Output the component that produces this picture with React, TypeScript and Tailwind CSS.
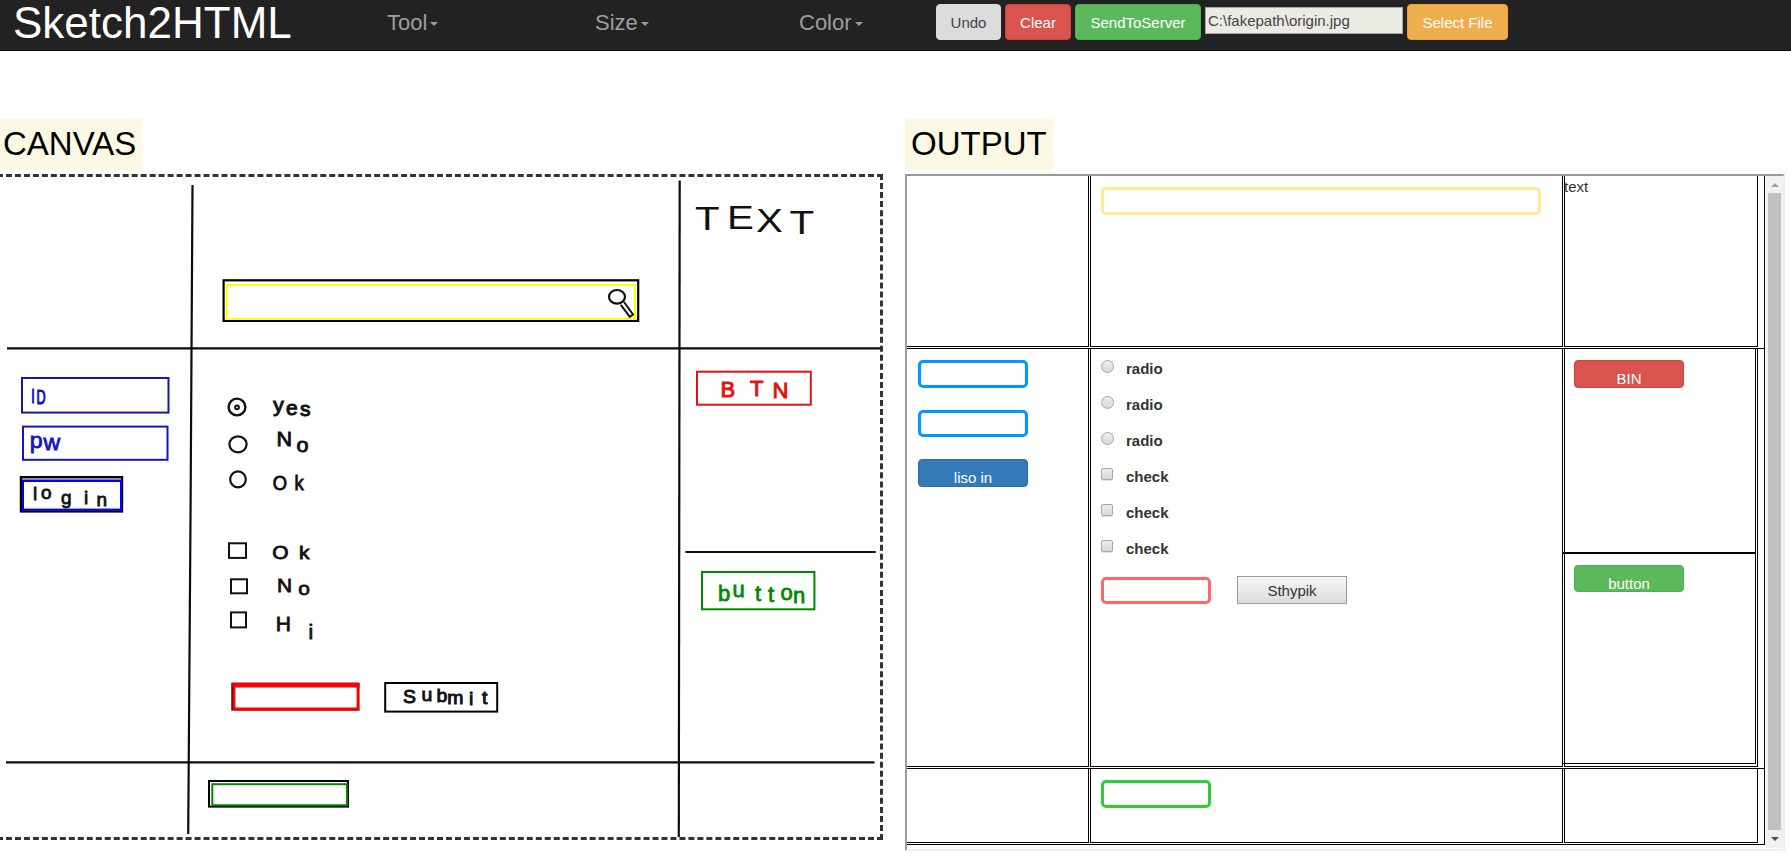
import type { ReactNode } from "react";

type InkProps = {
  text: string;
  xs: number[];
  ys: number[];
  size: number;
  sx?: number;
  color?: string;
  weight?: number;
};

/** A handwritten word: each letter has its own place on the canvas. */
function Ink({ text, xs, ys, size, sx = 1, color = "#111", weight = 0.8 }: InkProps) {
  return (
    <text
      transform={`scale(${sx} 1)`}
      x={xs.map((x) => (x / sx).toFixed(2)).join(" ")}
      y={ys.join(" ")}
      fontSize={size}
      fill={color}
      stroke={color}
      strokeWidth={weight}
      className="font-['Liberation_Sans',sans-serif]"
    >
      {text}
    </text>
  );
}

function Menu({ label, className }: { label: string; className: string }) {
  return (
    <button className={`flex h-[45px] items-center text-left text-[22px] leading-[45px] text-[#9d9d9d] ${className}`}>
      {label}
      <span className="ml-[3px] mt-[3px] border-x-4 border-t-4 border-x-transparent border-t-[#9d9d9d]" />
    </button>
  );
}

function NavButton({ children, className }: { children: ReactNode; className: string }) {
  return (
    <button className={`h-9 rounded-[4px] border text-center text-[15px] leading-[21px] ${className}`}>{children}</button>
  );
}

function Field({ className }: { className: string }) {
  return <input aria-label="field" className={`block rounded-[5px] border-[3px] bg-white outline-none ${className}`} />;
}

function OutButton({ label, className }: { label: string; className: string }) {
  return (
    <button
      className={`flex w-[110px] items-start justify-center rounded-[4px] border pt-[7px] text-[15px] leading-[21px] text-white ${className}`}
    >
      {label}
    </button>
  );
}

function Choice({ kind }: { kind: "radio" | "check" }) {
  return (
    <label className="flex h-9 items-start font-bold">
      <span
        className={
          kind === "radio"
            ? "mt-[2px] mr-3 size-[13px] rounded-full border border-[#a6a6a6] bg-linear-to-b from-[#ececec] to-[#d9d9d9]"
            : "mt-[2px] mr-[13px] size-3 rounded-[2px] border border-[#a6a6a6] bg-linear-to-b from-[#ececec] to-[#d9d9d9] shadow-[0_1px_1px_#ddd]"
        }
      />
      <span className="text-[15px] leading-[21px]">{kind}</span>
    </label>
  );
}

function Sketch() {
  return (
    <svg viewBox="0 177 880 660" className="block h-[660px] w-[880px]" fill="none" stroke="#111" strokeWidth="2.2">
      <g stroke="#0c0c0c">
        <path d="M192.5 185L190.5 520L188.2 834" />
        <path d="M679.7 180.5L678.8 837" />
        <path d="M7 348.4H880" />
        <path d="M6 762.3H874.5" />
        <path d="M685.5 552H875.7" />
      </g>

      <rect x="223.6" y="280.3" width="414.6" height="40.6" stroke="#000" />
      <rect x="226.8" y="285" width="408.2" height="34" stroke="#ffff00" strokeWidth="2" />
      <ellipse cx="617" cy="296.8" rx="8" ry="6.8" />
      <path d="M620.8 304.8L629.8 316.8L633 314.5L624 302" strokeWidth="2" />

      <rect x="22" y="378" width="146.5" height="34.6" stroke="#1818a8" strokeWidth="2" />
      <Ink text="ID" xs={[31.2, 36.6]} ys={[403.3, 404.2]} size={20} sx={0.63} color="#1414b4" weight={1.2} />
      <rect x="23" y="426.6" width="144.5" height="33.2" stroke="#1515c0" strokeWidth="2" />
      <Ink text="pw" xs={[29.8, 43.6]} ys={[448, 450]} size={22} sx={1.05} color="#1414c8" />
      <rect x="21" y="477.2" width="101" height="34.2" stroke="#000" strokeWidth="2.4" />
      <path d="M22 479.2H121" stroke="#7d7dcb" strokeWidth="1.6" />
      <rect x="23" y="481" width="98" height="28.6" stroke="#0000ff" strokeWidth="2" />
      <Ink text="login" xs={[33, 41, 61, 84, 96.5]} ys={[500, 498.5, 503.5, 503.5, 506]} size={19} />

      <circle cx="237" cy="407" r="8.4" strokeWidth="2.4" />
      <circle cx="237" cy="407.3" r="1.9" strokeWidth="2" />
      <ellipse cx="238" cy="444.3" rx="8.6" ry="8" strokeWidth="2.2" />
      <ellipse cx="238" cy="479.4" rx="7.8" ry="8" strokeWidth="2.2" />
      <Ink text="yes" xs={[273.2, 286, 300]} ys={[412, 415, 416]} size={20} sx={1.05} weight={1} />
      <Ink text="No" xs={[276.5, 296.5]} ys={[446, 451.7]} size={20} sx={1.08} weight={0.9} />
      <Ink text="Ok" xs={[272.7, 294.5]} ys={[490.5, 490.5]} size={20} sx={0.92} weight={0.9} />

      <rect x="229" y="543.3" width="17" height="14.6" strokeWidth="2" />
      <rect x="231" y="579.3" width="16" height="14" strokeWidth="2" />
      <rect x="231" y="612.4" width="15" height="15" strokeWidth="2" />
      <Ink text="Ok" xs={[272.2, 299]} ys={[559, 559.5]} size={19} sx={1.1} weight={0.9} />
      <Ink text="No" xs={[277, 298.3]} ys={[592, 594.7]} size={19} sx={1.1} />
      <Ink text="Hi" xs={[275.8, 308.6]} ys={[631, 638.5]} size={21} />

      <rect x="232.3" y="683.6" width="126" height="26" stroke="#111" strokeWidth="2" />
      <path d="M234 683.2V710M232.5 685.2H359.5M358 683.2V710M232.5 709H359.5" stroke="#ff0000" strokeWidth="2.8" />
      <path d="M232.5 685.2H359.5" stroke="#ff0000" strokeWidth="4.4" />
      <rect x="385.2" y="683" width="112" height="28.6" stroke="#000" strokeWidth="2" />
      <Ink
        text="Submit"
        xs={[403, 421.5, 436.5, 447.3, 469, 482]}
        ys={[703, 701.5, 702.5, 704, 705, 704.3]}
        size={18}
        sx={1.08}
        weight={0.9}
      />

      <rect x="209" y="781" width="139" height="25.6" stroke="#000" strokeWidth="2" />
      <rect x="212.3" y="784.2" width="134.6" height="21" stroke="#008a00" strokeWidth="2" />

      <Ink text="TEXT" xs={[695, 727, 756, 789.5]} ys={[230.5, 229.5, 232, 234]} size={33} sx={1.22} weight={0} />

      <rect x="697" y="371.7" width="113.8" height="33" stroke="#dc1414" strokeWidth="2" />
      <Ink text="BTN" xs={[720.5, 750, 772.5]} ys={[397, 396, 397.8]} size={22} color="#dc1414" weight={1} />
      <rect x="702" y="572" width="112.4" height="37.3" stroke="#008a00" strokeWidth="2" />
      <Ink
        text="button"
        xs={[718, 732.5, 755, 768, 780.5, 793]}
        ys={[600.5, 597, 600.5, 602, 600, 602.5]}
        size={22}
        color="#008a00"
      />
    </svg>
  );
}

function Output() {
  return (
    <div className="flex h-[677px] w-[880px] border-2 border-t-[#9a9a9a] border-r-[#eeeeee] border-b-[#eeeeee] border-l-[#9a9a9a] text-[#333]">
      <div className="w-[859px] shrink-0">
        <div className="flex h-[172px] w-[858px] gap-px border-r border-black pb-px">
          <div className="w-[182px] border-r border-b border-black" />
          <div className="w-[473px] border-x border-b border-black pt-[11px] pl-[10px]">
            <Field className="h-7 w-[440px] border-[#ffe993]" />
          </div>
          <div className="w-[194px] border-x border-b border-black text-[15px] leading-[21px]">
            <span className="-ml-px">text</span>
          </div>
        </div>

        <div className="flex h-[420px] w-[858px] gap-px border-t border-r border-black pb-px">
          <div className="flex w-[182px] flex-col border-r border-b border-black pt-[11px] pl-[11px]">
            <Field className="h-7 w-[110px] border-[#0099ff]" />
            <Field className="mt-[22px] h-[27px] w-[110px] border-[#0099ff]" />
            <OutButton label="liso in" className="mt-[22px] h-7 border-[#2e6da4] bg-[#337ab7]" />
          </div>
          <div className="w-[473px] border-x border-b border-black pt-[9px] pl-[10px]">
            <Choice kind="radio" />
            <Choice kind="radio" />
            <Choice kind="radio" />
            <Choice kind="check" />
            <Choice kind="check" />
            <Choice kind="check" />
            <div className="mt-[2px] flex gap-[26px]">
              <Field className="mt-px h-[27px] w-[110px] border-[#ff6666]" />
              <button className="h-7 w-[110px] border border-[#9c9c9c] bg-linear-to-b from-[#f6f6f6] to-[#dcdcdc] text-[15px] leading-[25px]">
                Sthypik
              </button>
            </div>
          </div>
          <div className="w-[194px] border-x border-b border-black">
            <div className="-ml-[3px] h-[204px] w-[194px] border-x border-b border-black pt-[11px] pl-[11px]">
              <OutButton label="BIN" className="h-7 border-[#d43f3a] bg-[#d9534f]" />
            </div>
            <div className="-ml-[3px] h-[211px] w-[194px] border border-black pt-[11px] pl-[11px]">
              <OutButton label="button" className="h-[27px] border-[#4cae4c] bg-[#5cb85c]" />
            </div>
          </div>
        </div>

        <div className="flex h-[77px] w-[858px] gap-px border-y border-r border-black pb-px">
          <div className="w-[182px] border-r border-b border-black" />
          <div className="w-[473px] border-x border-b border-black pt-[11px] pl-[10px]">
            <Field className="h-7 w-[110px] border-[#33cc33]" />
          </div>
          <div className="w-[194px] border-x border-b border-black" />
        </div>
      </div>

      <div className="flex h-[672px] w-[17px] flex-col items-center bg-[#f1f1f1]">
        <div className="flex h-[17px] items-center">
          <span className="border-x-4 border-b-4 border-x-transparent border-b-[#a3a3a3]" />
        </div>
        <div className="h-[637px] w-[13px] bg-[#c1c1c1]" />
        <div className="flex h-[18px] items-center">
          <span className="border-x-4 border-t-4 border-x-transparent border-t-[#505050]" />
        </div>
      </div>
    </div>
  );
}

export default function App() {
  return (
    <div className="h-[864px] w-[1791px] overflow-hidden bg-white font-['Liberation_Sans',Arial,sans-serif] text-[#333]">
      <nav className="flex h-[51px] items-start border-b border-[#080808] bg-[#222]">
        <span className="w-[387px] shrink-0 pl-[13px] text-[44px] leading-[46px] text-white">Sketch2HTML</span>
        <Menu label="Tool" className="w-[208px]" />
        <Menu label="Size" className="w-[204px]" />
        <Menu label="Color" className="w-[137px]" />
        <div className="flex gap-1 pt-1">
          <NavButton className="w-[65px] border-[#dcdcdc] bg-[#dcdcdc] text-[#444]">Undo</NavButton>
          <NavButton className="w-[66px] border-[#d43f3a] bg-[#d9534f] text-white">Clear</NavButton>
          <NavButton className="w-[126px] border-[#4cae4c] bg-[#5cb85c] text-white">SendToServer</NavButton>
          <input
            readOnly
            aria-label="file path"
            value="C:\fakepath\origin.jpg"
            className="mt-[3px] h-[27px] w-[198px] self-start border border-[#a9a9a9] bg-[#ebebe4] px-[2px] text-[15px] text-[#444]"
          />
          <NavButton className="w-[101px] border-[#eea236] bg-[#f0ad4e] text-white">Select File</NavButton>
        </div>
      </nav>

      <main className="flex pt-[68px]">
        <section className="w-[905px] shrink-0">
          <h1 className="mb-1 h-[51px] w-[142px] bg-[#fcf8e3] pl-[3px] text-[33px] leading-[49px] text-black">CANVAS</h1>
          <div className="-ml-[3px] h-[666px] w-[886px] border-[3px] border-dashed border-[#333]">
            <Sketch />
          </div>
        </section>
        <section>
          <h1 className="mb-1 h-[51px] w-[148px] bg-[#fcf8e3] pl-[6px] text-[33px] leading-[49px] text-black">OUTPUT</h1>
          <Output />
        </section>
      </main>
    </div>
  );
}
